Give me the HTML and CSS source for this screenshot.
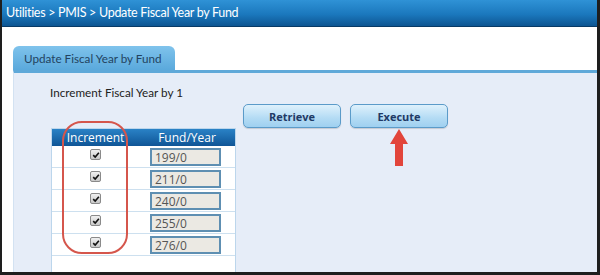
FILE: index.html
```html
<!DOCTYPE html>
<html lang="en">
<head>
  <meta charset="UTF-8">
  <title>Update Fiscal Year by Fund</title>
  <link rel="stylesheet" href="styles.css">
</head>
<body>
  <div class="screen">
    <div class="topbar">Utilities &gt; PMIS &gt; Update Fiscal Year by Fund</div>

    <div class="main">
      <div class="tabs">
        <div class="tab">Update Fiscal Year by Fund</div>
      </div>

      <div class="panel">
        <div class="leftcol">
          <div class="caption">Increment Fiscal Year by 1</div>

          <div class="gridbox">
            <table class="grid">
              <tr>
                <th class="colinc">Increment</th>
                <th>Fund/Year</th>
              </tr>
              <tr>
                <td class="colinc"><span class="chk"><svg viewBox="0 0 10 10" width="8" height="8"><path d="M1.5 5.2 L4 7.6 L8.6 2.2" fill="none" stroke="#111" stroke-width="2"/></svg></span></td>
                <td><input type="text" class="fund" value="199/0" readonly></td>
              </tr>
              <tr>
                <td class="colinc"><span class="chk"><svg viewBox="0 0 10 10" width="8" height="8"><path d="M1.5 5.2 L4 7.6 L8.6 2.2" fill="none" stroke="#111" stroke-width="2"/></svg></span></td>
                <td><input type="text" class="fund" value="211/0" readonly></td>
              </tr>
              <tr>
                <td class="colinc"><span class="chk"><svg viewBox="0 0 10 10" width="8" height="8"><path d="M1.5 5.2 L4 7.6 L8.6 2.2" fill="none" stroke="#111" stroke-width="2"/></svg></span></td>
                <td><input type="text" class="fund" value="240/0" readonly></td>
              </tr>
              <tr>
                <td class="colinc"><span class="chk"><svg viewBox="0 0 10 10" width="8" height="8"><path d="M1.5 5.2 L4 7.6 L8.6 2.2" fill="none" stroke="#111" stroke-width="2"/></svg></span></td>
                <td><input type="text" class="fund" value="255/0" readonly></td>
              </tr>
              <tr>
                <td class="colinc"><span class="chk"><svg viewBox="0 0 10 10" width="8" height="8"><path d="M1.5 5.2 L4 7.6 L8.6 2.2" fill="none" stroke="#111" stroke-width="2"/></svg></span></td>
                <td><input type="text" class="fund" value="276/0" readonly></td>
              </tr>
            </table>
            <!-- annotation around the checkbox column -->
            <div class="callout"></div>
          </div>
        </div>

        <div class="buttons">
          <button class="btn">Retrieve</button>
          <button class="btn">Execute</button>
          <!-- annotation arrow pointing at Execute -->
          <svg class="arrow" viewBox="0 0 20 40" width="20" height="40">
            <path d="M10 1 L19 16 L14 16 L14 38 L6 38 L6 16 L1 16 Z" fill="#e2453b"/>
          </svg>
        </div>
      </div>
    </div>
  </div>
</body>
</html>
```

FILE: styles.css
```css
body {
  margin: 0;
  font-family: "Open Sans", "DejaVu Sans", sans-serif;
  background: #fff;
}

.screen {
  width: 600px;
  height: 275px;
  box-sizing: border-box;
  border-style: solid;
  border-color: #1e1e1e;
  border-width: 0 3px 3px 2px;
  display: flex;
  flex-direction: column;
  overflow: hidden;
}

.topbar {
  height: 27px;
  line-height: 26px;
  padding-left: 4px;
  color: #fff;
  font-family: Lato, "Open Sans", sans-serif;
  font-size: 12.5px;
  letter-spacing: -0.3px;
  background: linear-gradient(#2f92d6, #1b78bd 55%, #0d5592);
  border-bottom: 1px solid #083a66;
  box-sizing: border-box;
}

.main {
  flex: 1;
  display: flex;
  flex-direction: column;
  padding: 19px 0 0 11px;
}

.tabs {
  display: flex;
}

.tab {
  width: 162px;
  height: 24px;
  box-sizing: border-box;
  padding: 5px 0 0 11px;
  font-family: Lato, "Open Sans", sans-serif;
  font-size: 11.7px;
  color: #23435f;
  background: linear-gradient(#7fc3ec, #5aa9dc);
  border-radius: 6px 6px 0 0;
}

.panel {
  flex: 1;
  display: flex;
  background: #e6edf8;
  border-top: 3px solid #5fa9d9;
  border-left: 1px solid #d3e2f2;
  padding: 11px 0 0 36px;
}

.leftcol {
  display: flex;
  flex-direction: column;
  width: 185px;
}

.caption {
  font-family: Lato, "Open Sans", sans-serif;
  font-size: 11.7px;
  line-height: 16px;
  color: #222;
}

.gridbox {
  position: relative;
  flex: 1;
  margin: 28px 0 0 1px;
  width: 183px;
  background: #fff;
  border: 1px solid #bcd6ec;
  border-bottom: none;
}

.grid {
  width: 100%;
  border-collapse: collapse;
}

.grid th {
  height: 16px;
  padding: 0;
  font-size: 12px;
  font-weight: normal;
  color: #fff;
  background: linear-gradient(#2a82c6, #0f5596);
}

.grid td {
  height: 21px;
  padding: 0;
  border-bottom: 1px solid #cde0ef;
  vertical-align: top;
}

.colinc {
  width: 87px;
}

.chk {
  display: flex;
  align-items: center;
  justify-content: center;
  width: 9px;
  height: 9px;
  margin: 3px auto 0;
  border: 1px solid #8a8a8a;
  border-radius: 2px;
  background: linear-gradient(#f0f0f0, #c8c8c8);
}

.fund {
  display: block;
  width: 71px;
  height: 18px;
  margin: 2px 0 0 11px;
  padding: 0 0 0 3px;
  box-sizing: border-box;
  border: 2px solid #5e8fb2;
  background: #ebe9e3;
  font-family: "Open Sans", "DejaVu Sans", sans-serif;
  font-size: 12px;
  color: #555;
  outline: none;
}

.callout {
  position: absolute;
  left: 10px;
  top: -8px;
  width: 66px;
  height: 133px;
  box-sizing: border-box;
  border: 2.5px solid #d5564c;
  border-radius: 20px;
}

.buttons {
  position: relative;
  display: flex;
  gap: 9px;
  align-items: flex-start;
  margin: 20px 0 0 8px;
}

.btn {
  width: 98px;
  height: 24px;
  padding: 0;
  font-family: "Open Sans", "DejaVu Sans", sans-serif;
  font-size: 11px;
  font-weight: bold;
  color: #1f3a66;
  background: linear-gradient(#dff1fc, #b3dbf4 60%, #9fd0f0);
  border: 1px solid #5b9bc9;
  border-radius: 5px;
  box-shadow: 0 1px 1px rgba(0,0,0,0.15);
}

.arrow {
  position: absolute;
  left: 146px;
  top: 24px;
}
```
